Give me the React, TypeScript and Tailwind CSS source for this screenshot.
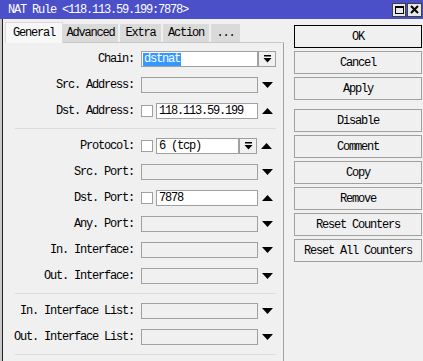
import React from "react";

const font = { fontFamily: '"Liberation Mono", "DejaVu Sans Mono", monospace' };

function DropBtn({ w = "w-[18px]" }: { w?: string }) {
  return (
    <div className={`${w} h-[16px] border border-[#a0a0a0] bg-[#f0f0f0] flex items-center justify-center shrink-0`}>
      <svg width="9" height="8" viewBox="0 0 9 8">
        <rect x="1" y="0" width="7" height="1.5" fill="#000" />
        <path d="M0.5 3 L8.5 3 L4.5 7.5 Z" fill="#000" />
      </svg>
    </div>
  );
}

function Arrow({ up }: { up?: boolean }) {
  return (
    <div className="w-[18px] h-[16px] flex items-center justify-center shrink-0">
      <svg width="11" height="6" viewBox="0 0 11 6">
        {up ? <path d="M0 6 L11 6 L5.5 0 Z" fill="#000" /> : <path d="M0 0 L11 0 L5.5 6 Z" fill="#000" />}
      </svg>
    </div>
  );
}

function Check() {
  return <div className="w-[12px] h-[12px] border border-[#a0a0a0] bg-white shrink-0 mr-[3px]" />;
}

function Input({ w, value, white, selected }: { w: string; value?: string; white?: boolean; selected?: boolean }) {
  return (
    <div
      className={`${w} h-[16px] border border-[#a0a0a0] ${white ? "bg-white" : "bg-[#f0f0f0]"} shrink-0 flex items-center pl-[1px] overflow-hidden`}
    >
      {value ? (
        <span className={`leading-[13px] h-[13px] ${selected ? "bg-[#3399ff] text-white" : "text-black"} px-[1px]`}>{value}</span>
      ) : null}
    </div>
  );
}

function Row({ label, children }: { label: string; children: React.ReactNode }) {
  return (
    <div className="flex items-center h-[16px]">
      <div className="w-[130px] text-right pr-[1px] leading-[16px] text-black whitespace-nowrap">{label}</div>
      <div className="w-[6px]" />
      <div className="flex items-center">{children}</div>
    </div>
  );
}

function Sep() {
  return <div className="ml-[10px] w-[261px] h-px bg-[#dcdcdc] my-[9px]" />;
}

function Btn({ children, def }: { children: React.ReactNode; def?: boolean }) {
  return (
    <div
      className={`w-[128px] h-[23px] border ${def ? "border-black" : "border-[#a0a0a0]"} bg-[#f0f0f0] flex items-center justify-center text-black leading-none`}
    >
      {children}
    </div>
  );
}

export default function App() {
  return (
    <div
      className="w-[423px] h-[361px] bg-[#f0f0f0] overflow-hidden flex flex-col text-[12px] tracking-[-1.2px]"
      style={font}
    >
      {/* title bar */}
      <div className="h-[19px] bg-[#4b4fc8] flex items-center shrink-0">
        <div className="pl-[8px] text-white leading-none flex-1 whitespace-nowrap">NAT Rule &lt;118.113.59.199:7878&gt;</div>
        <div className="flex gap-[1px] pr-[1px]">
          <div className="w-[14px] h-[14px] bg-[#e8e8e8] border border-[#404040] flex items-center justify-center">
            <div className="w-[9px] h-[8px] border border-black border-t-2" />
          </div>
          <div className="w-[15px] h-[14px] bg-[#e8e8e8] border border-[#404040] flex items-center justify-center">
            <svg width="9" height="9" viewBox="0 0 9 9">
              <path d="M1 1 L8 8 M8 1 L1 8" stroke="#000" strokeWidth="2" />
            </svg>
          </div>
        </div>
      </div>

      <div className="flex flex-1 min-h-0">
        {/* left window edge */}
        <div className="w-[3px] flex shrink-0">
          <div className="w-[2px] bg-[#c8c8c8]" />
          <div className="w-[1px] bg-[#202020]" />
        </div>
        <div className="w-[2px] shrink-0" />

        {/* tabs + panel */}
        <div className="w-[279px] flex flex-col shrink-0">
          <div className="h-[24px] flex items-end shrink-0">
            <div className="w-[58px] h-[21px] bg-[#f7f7f7] border-t border-l border-r border-[#dcdcdc] flex items-center justify-center text-black">
              General
            </div>
            <div className="flex items-end flex-1 h-[18px] border-b border-[#c8c8c8]">
              <div className="w-[57px] h-[18px] bg-[#dadada] border-r-2 border-[#f0f0f0] flex items-center justify-center text-black">Advanced</div>
              <div className="w-[43px] h-[18px] bg-[#dadada] border-r-2 border-[#f0f0f0] flex items-center justify-center text-black">Extra</div>
              <div className="w-[48px] h-[18px] bg-[#dadada] border-r-2 border-[#f0f0f0] flex items-center justify-center text-black">Action</div>
              <div className="w-[29px] h-[18px] bg-[#dadada] flex items-center justify-center text-black">...</div>
            </div>
          </div>
          <div className="flex-1 border-r border-[#a0a0a0] pt-[8px] flex flex-col">
            <div className="flex flex-col gap-[10px]">
              <Row label="Chain:">
                <Input w="w-[117px]" value="dstnat" white selected />
                <DropBtn />
              </Row>
              <Row label="Src. Address:">
                <Input w="w-[117px]" />
                <Arrow />
              </Row>
              <Row label="Dst. Address:">
                <Check />
                <Input w="w-[102px]" value="118.113.59.199" white />
                <Arrow up />
              </Row>
            </div>
            <Sep />
            <div className="flex flex-col gap-[10px]">
              <Row label="Protocol:">
                <Check />
                <Input w="w-[83px]" value="6 (tcp)" white />
                <DropBtn />
                <Arrow up />
              </Row>
              <Row label="Src. Port:">
                <Input w="w-[117px]" />
                <Arrow />
              </Row>
              <Row label="Dst. Port:">
                <Check />
                <Input w="w-[102px]" value="7878" white />
                <Arrow up />
              </Row>
              <Row label="Any. Port:">
                <Input w="w-[117px]" />
                <Arrow />
              </Row>
              <Row label="In. Interface:">
                <Input w="w-[117px]" />
                <Arrow />
              </Row>
              <Row label="Out. Interface:">
                <Input w="w-[117px]" />
                <Arrow />
              </Row>
            </div>
            <Sep />
            <div className="flex flex-col gap-[10px]">
              <Row label="In. Interface List:">
                <Input w="w-[117px]" />
                <Arrow />
              </Row>
              <Row label="Out. Interface List:">
                <Input w="w-[117px]" />
                <Arrow />
              </Row>
            </div>
            <Sep />
          </div>
        </div>

        {/* buttons */}
        <div className="ml-[10px] pt-[6px] flex flex-col">
          <div className="flex flex-col gap-[3px]">
            <Btn def>OK</Btn>
            <Btn>Cancel</Btn>
            <Btn>Apply</Btn>
          </div>
          <div className="flex flex-col gap-[3px] mt-[9px]">
            <Btn>Disable</Btn>
            <Btn>Comment</Btn>
            <Btn>Copy</Btn>
            <Btn>Remove</Btn>
            <Btn>Reset Counters</Btn>
            <Btn>Reset All Counters</Btn>
          </div>
        </div>
      </div>
    </div>
  );
}
